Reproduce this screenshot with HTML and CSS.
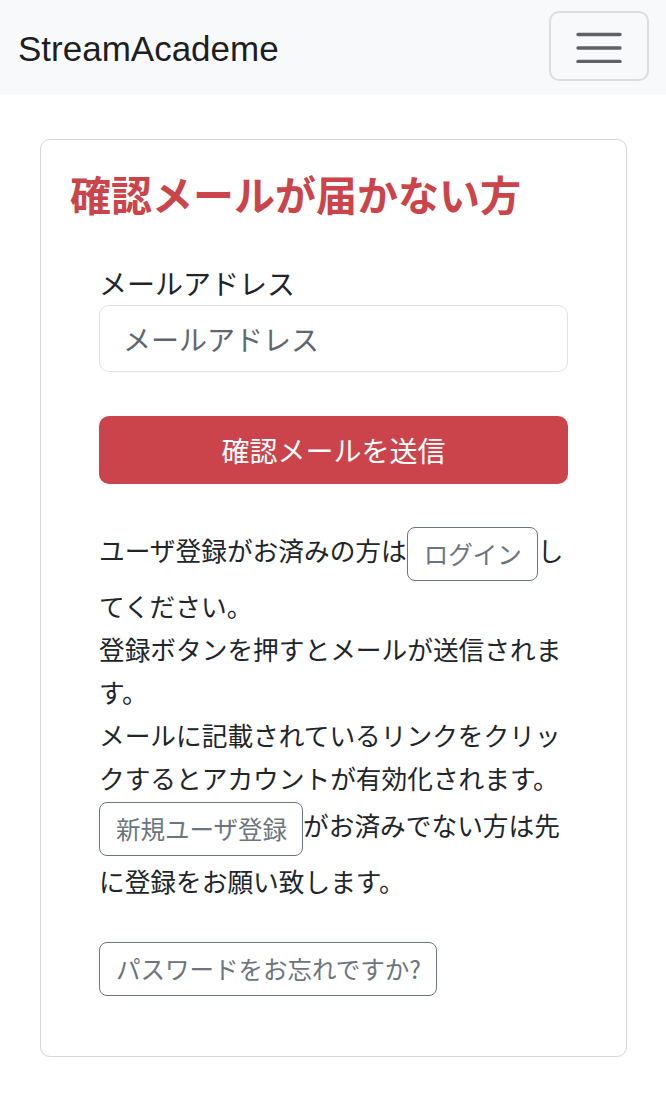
FILE: index.html
```html
<!DOCTYPE html>
<html lang="ja">
<head>
<meta charset="utf-8">
<title>StreamAcademe</title>
<link rel="stylesheet" href="styles.css">
</head>
<body>
<nav class="navbar">
  <a class="brand" href="#">StreamAcademe</a>
  <button class="toggler" type="button" aria-label="menu">
    <svg class="toggler-icon" viewBox="0 0 46 34" width="46" height="34">
      <path d="M2 5.5H44M2 19H44M2 32.5H44" stroke="#5f6165" stroke-width="3.4" stroke-linecap="round"/>
    </svg>
  </button>
</nav>
<main class="container">
  <section class="card">
    <h1 class="card-title">確認メールが届かない方</h1>
    <form class="form">
      <label class="label" for="email">メールアドレス</label>
      <input class="input" id="email" type="email" placeholder="メールアドレス">
      <button class="btn-submit" type="button">確認メールを送信</button>
      <p class="info">ユーザ登録がお済みの方は<a class="btn-outline" href="#">ログイン</a>してください。<br>登録ボタンを押すとメールが送信されます。<br>メールに記載されているリンクをクリックするとアカウントが有効化されます。<br><a class="btn-outline" href="#">新規ユーザ登録</a>がお済みでない方は先に登録をお願い致します。</p>
      <div class="forgot"><a class="btn-outline" href="#">パスワードをお忘れですか?</a></div>
    </form>
  </section>
</main>
</body>
</html>
```
FILE: styles.css
```css
* { box-sizing: border-box; }
html, body { margin: 0; padding: 0; }
body {
  background: #fff;
  color: #212529;
  font-family: "Noto Sans CJK JP", "Liberation Sans", sans-serif;
}
.navbar {
  height: 95px;
  background: #f8f9fa;
  display: flex;
  align-items: center;
  justify-content: space-between;
  padding: 0 17px 4px 18px;
}
.brand {
  font-family: "Liberation Sans", Arial, sans-serif;
  font-size: 35px;
  color: rgba(0,0,0,.9);
  text-decoration: none;
  line-height: 1;
  margin-top: 6px;
}
.toggler {
  width: 100px;
  height: 70px;
  background: transparent;
  border: 2px solid #dcdddf;
  border-radius: 10px;
  display: flex;
  align-items: center;
  justify-content: center;
  padding: 0;
}
.toggler-icon { display: block; }
.container { padding: 44px 39px 40px 40px; }
.card {
  border: 1.5px solid #d6d6d6;
  border-radius: 10px;
  padding: 29px 29px 60px 29px;
}
.card-title {
  margin: 0;
  color: #cb444a;
  font-size: 41px;
  line-height: 49px;
  font-weight: 700;
}
.form {
  padding: 44px 29px 0 29px;
  display: flex;
  flex-direction: column;
}
.label {
  font-size: 28px;
  line-height: 42px;
  margin-bottom: 1px;
}
.input {
  height: 67px;
  border: 1.5px solid #dee2e6;
  border-radius: 10px;
  padding: 0 23px;
  font-family: inherit;
  font-size: 28px;
  color: #212529;
}
.input::placeholder { color: #5f666d; }
.btn-submit {
  margin-top: 44px;
  height: 68px;
  border: none;
  border-radius: 10px;
  background: #cb444b;
  color: #fff;
  font-family: inherit;
  font-size: 28px;
}
.info {
  margin: 40px 0 0 0;
  font-size: 25.7px;
  line-height: 43px;
}
.btn-outline {
  display: inline-block;
  vertical-align: middle;
  margin: 3px 0;
  padding: 9px 15px 9px 16px;
  border: 1.5px solid #6c757d;
  border-radius: 8px;
  color: #6c757d;
  font-size: 24.5px;
  line-height: 34px;
  text-decoration: none;
}
.forgot { margin-top: 40px; }
.forgot .btn-outline { margin: 0; }
```
